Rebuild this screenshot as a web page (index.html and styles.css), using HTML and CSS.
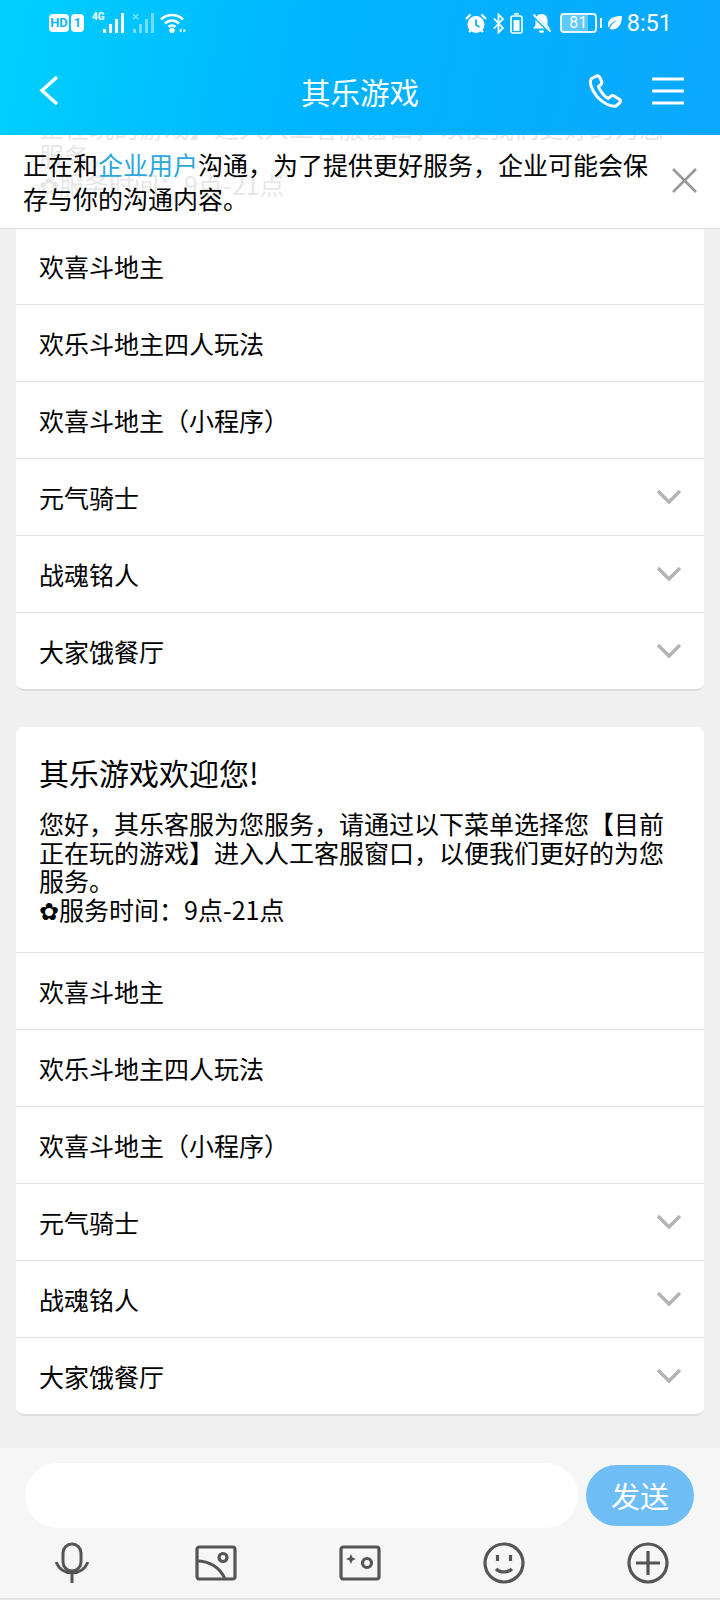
FILE: index.html
```html
<!DOCTYPE html>
<html lang="zh-CN">
<head>
  <meta charset="UTF-8">
  <meta name="viewport" content="width=device-width, initial-scale=1.0">
  <title>其乐游戏</title>
  <link rel="stylesheet" href="styles.css">
</head>
<body>
  <div class="page">
    <header class="top">
      <div class="status">
        <div class="status-left">
          <span class="badge badge-hd">HD</span>
          <span class="badge badge-sim">1</span>
          <span class="net">
            <span class="net-label">4G</span>
            <svg class="bars" width="22" height="20" viewBox="0 0 22 20"><path d="M1 20v-4h3v4zM7 20V11h3v9zM13 20V6h3v14zM19 20V0h3v20z" fill="#fff"/></svg>
          </span>
          <span class="net net-off">
            <span class="net-label">×</span>
            <svg class="bars" width="22" height="20" viewBox="0 0 22 20"><path d="M1 20v-4h3v4zM7 20V11h3v9zM13 20V6h3v14zM19 20V0h3v20z" fill="#fff"/></svg>
          </span>
          <svg class="wifi" width="26" height="20" viewBox="0 0 26 20" fill="none" stroke="#fff" stroke-width="2.6">
            <path d="M1 6.5C7 .5 17 .5 23 6.5"/>
            <path d="M5 10.5c4-4 10-4 14 0"/>
            <path d="M8.6 14c2-2 4.800-2 6.800 0"/>
            <circle cx="12" cy="17.500" r="1.400" fill="#fff"/>
            <path d="M19 17.500l2.500-2v4zM26 17.500l-2.500-2v4z" fill="#fff" stroke="none"/>
          </svg>
        </div>
        <div class="status-right">
          <svg class="icon-tight" width="22" height="21" viewBox="0 0 22 21">
            <circle cx="11" cy="11.500" r="8.500" fill="#fff"/>
            <path d="M11 6.500v5.500l3.500 2" fill="none" stroke="#0db3ff" stroke-width="1.800"/>
            <path d="M1 6l4.500-4.500M21 6l-4.500-4.500M4 19l2-2M18 19l-2-2" stroke="#fff" stroke-width="2.400"/>
          </svg>
          <svg class="icon-tight" width="11" height="21" viewBox="0 0 11 21" fill="none" stroke="#fff" stroke-width="1.800"><path d="M1 5.500l9 9.500-4.500 4.500V1.500L10 6 1 15.500"/></svg>
          <svg width="13" height="21" viewBox="0 0 13 21" fill="none" stroke="#fff"><path d="M4 .8h5" stroke-width="1.600"/><rect x="1" y="3" width="11" height="17" rx="2" stroke-width="1.600"/><rect x="3.500" y="7" width="6" height="11" fill="#fff" stroke="none"/></svg>
          <svg width="21" height="21" viewBox="0 0 21 21"><path d="M10.500 1c-4 0-6 3-6 6.500V12L2 15.500h17L16.500 12V7.500c0-3.500-2-6.500-6-6.500zM8 17.500h5a2.500 2.500 0 0 1-5 0z" fill="#fff"/><path d="M2 2l17 17" stroke="#0db3ff" stroke-width="3.400"/><path d="M2.500 1.500l17 17" stroke="#fff" stroke-width="1.800"/></svg>
          <span class="battery"><span class="battery-num">81</span></span>
          <svg class="leaf" width="15" height="14" viewBox="0 0 15 14"><path d="M15 0C7 0 1 2 1 9c0 1 .3 2 .8 3C3 8 6 5.500 10 4 7 6 4 9 2.500 13 8 15 15 11 15 0z" fill="#fff"/></svg>
          <span class="clock">8:51</span>
        </div>
      </div>
      <div class="nav">
        <svg class="nav-back" width="20" height="31" viewBox="0 0 20 31" fill="none" stroke="#fff" stroke-width="3.400"><path d="M18 2L3 15.500 18 29"/></svg>
        <h1 class="nav-title">其乐游戏</h1>
        <div class="nav-actions">
          <svg width="34" height="34" viewBox="0 0 34 34" fill="none" stroke="#fff" stroke-width="3" stroke-linejoin="round"><path d="M8.500 2L3.500 4.500C1 8 3 15 9 22.500c6 7 14 10.500 19 9.500l4-3.500c1-1.500.5-2.500-1-3.500l-5-3c-1.500-1-2.500-.5-3.500.5l-2 2c-3-.5-9-8-10-12l2.500-2c1-1 1.200-2 .5-3.500L11.500 3C10.800 1.800 9.800 1.500 8.500 2z"/></svg>
          <svg width="34" height="28" viewBox="0 0 34 28" stroke="#fff" stroke-width="3.200"><path d="M1 2h32M1 14h32M1 26h32"/></svg>
        </div>
      </div>
    </header>

    <main class="chat">
      <div class="notice">
        <p class="notice-text">正在和<span class="notice-link">企业用户</span>沟通，为了提供更好服务，企业可能会保存与你的沟通内容。</p>
        <svg class="notice-close" width="27" height="27" viewBox="0 0 27 27" stroke="#999" stroke-width="2.600"><path d="M2 2l23 23M25 2L2 25"/></svg>
      </div>

      <div class="chat-scroll">
        <section class="card">
          <div class="card-head">
            <h2 class="card-title">其乐游戏欢迎您!</h2>
            <p class="card-text">您好，其乐客服为您服务，请通过以下菜单选择您【目前正在玩的游戏】进入人工客服窗口，以便我们更好的为您服务。<br><span class="flower">✿</span>服务时间：9点-21点</p>
          </div>
          <div class="row">欢喜斗地主</div>
          <div class="row">欢乐斗地主四人玩法</div>
          <div class="row">欢喜斗地主（小程序）</div>
          <div class="row">元气骑士<svg class="chevron" width="26" height="16" viewBox="0 0 26 16" fill="none" stroke="#b4b4b4" stroke-width="3.400"><path d="M2 2l11 11L24 2"/></svg></div>
          <div class="row">战魂铭人<svg class="chevron" width="26" height="16" viewBox="0 0 26 16" fill="none" stroke="#b4b4b4" stroke-width="3.400"><path d="M2 2l11 11L24 2"/></svg></div>
          <div class="row">大家饿餐厅<svg class="chevron" width="26" height="16" viewBox="0 0 26 16" fill="none" stroke="#b4b4b4" stroke-width="3.400"><path d="M2 2l11 11L24 2"/></svg></div>
        </section>

        <section class="card">
          <div class="card-head">
            <h2 class="card-title">其乐游戏欢迎您!</h2>
            <p class="card-text">您好，其乐客服为您服务，请通过以下菜单选择您【目前正在玩的游戏】进入人工客服窗口，以便我们更好的为您服务。<br><span class="flower">✿</span>服务时间：9点-21点</p>
          </div>
          <div class="row">欢喜斗地主</div>
          <div class="row">欢乐斗地主四人玩法</div>
          <div class="row">欢喜斗地主（小程序）</div>
          <div class="row">元气骑士<svg class="chevron" width="26" height="16" viewBox="0 0 26 16" fill="none" stroke="#b4b4b4" stroke-width="3.400"><path d="M2 2l11 11L24 2"/></svg></div>
          <div class="row">战魂铭人<svg class="chevron" width="26" height="16" viewBox="0 0 26 16" fill="none" stroke="#b4b4b4" stroke-width="3.400"><path d="M2 2l11 11L24 2"/></svg></div>
          <div class="row">大家饿餐厅<svg class="chevron" width="26" height="16" viewBox="0 0 26 16" fill="none" stroke="#b4b4b4" stroke-width="3.400"><path d="M2 2l11 11L24 2"/></svg></div>
        </section>
      </div>
    </main>

    <footer class="composer">
      <div class="composer-row">
        <div class="composer-input"></div>
        <button class="composer-send" type="button">发送</button>
      </div>
      <div class="tools">
        <svg width="36" height="42" viewBox="0 0 36 42" fill="none" stroke="#555" stroke-width="3">
          <rect x="9" y="2" width="18" height="27" rx="9"/>
          <path d="M2 20c3 7 9 11 16 11s13-4 16-11M18 31v10"/>
        </svg>
        <svg width="42" height="36" viewBox="0 0 42 36" fill="none" stroke="#555" stroke-width="3.200">
          <rect x="2" y="2" width="38" height="32" rx="2.500"/>
          <circle cx="28" cy="12.500" r="4"/>
          <path d="M2 16c12 0 23 6 28 18"/>
        </svg>
        <svg width="42" height="36" viewBox="0 0 42 36" fill="none" stroke="#555" stroke-width="3.200">
          <rect x="2" y="2" width="38" height="32" rx="2.500"/>
          <circle cx="28" cy="18" r="4.500"/>
          <path d="M12 9l1.500 3.500L17 14l-3.500 1.500L12 19l-1.500-3.500L7 14l3.500-1.500z" fill="#555" stroke="none"/>
        </svg>
        <svg width="42" height="42" viewBox="0 0 42 42" fill="none" stroke="#555" stroke-width="3.200">
          <circle cx="21" cy="21" r="19"/>
          <path d="M14.500 13v6M27.500 13v6M13 27c4 4 12 4 16 0"/>
        </svg>
        <svg width="42" height="42" viewBox="0 0 42 42" fill="none" stroke="#555" stroke-width="3.200">
          <circle cx="21" cy="21" r="19"/>
          <path d="M9 21h24M21 9v24"/>
        </svg>
      </div>
    </footer>
  </div>
</body>
</html>
```

FILE: styles.css
```css
* { box-sizing: border-box; }
html, body { margin: 0; padding: 0; }
body { font-family: "Noto Sans CJK SC", "Noto Sans", sans-serif; color: #000; background: #f0f0f0; }
h1, h2, p { margin: 0; font-weight: normal; }

.page { width: 720px; height: 1600px; display: flex; flex-direction: column; overflow: hidden; }

/* header */
.top { height: 135px; flex: none; background: linear-gradient(100deg, #00d0ff 0%, #00b4ff 45%, #0ba8ff 100%); color: #fff; }
.status { height: 46px; display: flex; justify-content: space-between; align-items: center; padding: 0 48px 0 49px; }
.status-left, .status-right { display: flex; align-items: center; }
.status-left { gap: 2px; }
.status-right { gap: 8px; }
.icon-tight { margin-right: -2px; }
.badge { height: 18px; background: #fff; color: #12b6ff; border-radius: 4px; font: bold 13px/18px "Roboto", sans-serif; text-align: center; }
.badge-hd { width: 20px; }
.badge-sim { width: 13px; margin-right: 6px; }
.net { display: flex; align-items: flex-end; height: 20px; position: relative; width: 32px; justify-content: flex-end; }
.net-off { opacity: .45; width: 22px; margin-left: 6px; }
.net-label { position: absolute; left: 0; top: -1px; font: bold 10px/10px "Roboto", sans-serif; }
.net-off .net-label { font-size: 13px; }
.wifi { margin-left: 4px; }
.battery { width: 37px; height: 20px; border: 2px solid #e6f6ff; border-radius: 4px; position: relative; display: block; margin-right: 2px; background: linear-gradient(90deg, rgba(255,255,255,.35) 80%, transparent 80%); }
.battery::after { content: ""; position: absolute; right: -7px; top: 3px; width: 2px; height: 10px; background: #fff; }
.battery-num { display: block; font: 16px/16px "Roboto", sans-serif; text-align: center; }
.leaf { margin-right: -3px; }
.clock { font: 23.500px/28px "Roboto", sans-serif; }

.nav { height: 89px; display: grid; grid-template-columns: 1fr auto 1fr; align-items: center; padding: 0 35px; }
.nav-back { margin-left: 4px; }
.nav-title { text-align: center; font-size: 29.500px; line-height: 40px; }
.nav-actions { display: flex; justify-content: flex-end; align-items: center; gap: 29px; }

/* messages */
.chat { flex: 1; position: relative; overflow: hidden; background: #f0f0f0; }
.chat-scroll { margin-top: -133px; padding: 0 16px; }
.notice { position: absolute; left: 0; right: 0; top: 0; height: 94px; display: flex; align-items: center; padding: 0 22px 0 23px; background: rgba(255, 255, 255, .9); border-bottom: 1px solid #dcdcdc; z-index: 2; }
.notice-text { flex: 1; font-size: 25px; line-height: 34px; padding-right: 22px; margin-top: -2px; }
.notice-link { color: #2aa8dc; }
.notice-close { flex: none; margin-top: -2px; }

.card { background: #fff; border-radius: 8px; border-bottom: 2px solid #dddddd; margin-bottom: 36px; overflow: hidden; }
.card-head { height: 225px; padding: 25px 23px 0; }
.card-title { font-size: 30px; line-height: 40px; margin-bottom: 17px; }
.card-text { font-size: 25px; line-height: 28.500px; }
.flower { font-family: "DejaVu Sans", sans-serif; font-size: 24px; }
.row { height: 77px; display: flex; align-items: center; justify-content: space-between; padding: 0 23px; border-top: 1.500px solid #e2e2e2; font-size: 25px; }
.chevron { margin-right: -1px; }

/* bottom */
.composer { height: 152px; flex: none; background: #f6f6f6; border-bottom: 2px solid #e4e4e4; padding-top: 15px; }
.composer-row { display: flex; align-items: center; padding: 0 26px 0 25px; gap: 8px; }
.composer-input { flex: 1; height: 65px; background: #fff; border-radius: 33px; }
.composer-send { width: 108px; height: 61px; border: none; border-radius: 31px; background: #6fbdf5; color: #fff; font: 29px/61px "Noto Sans CJK SC", sans-serif; padding: 0; }
.tools { display: grid; grid-template-columns: repeat(5, 1fr); justify-items: center; align-items: center; margin-top: 14px; height: 42px; }
```
